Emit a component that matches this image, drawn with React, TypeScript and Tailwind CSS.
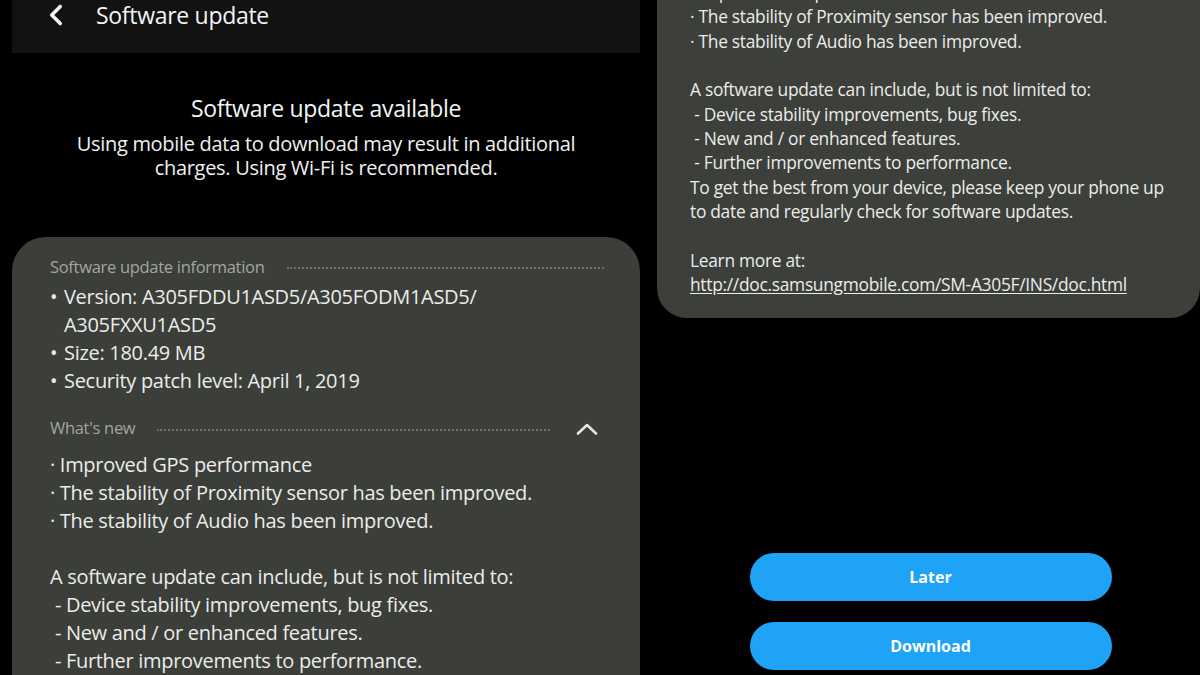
import { ChevronLeft } from "lucide-react";

const font = { fontFamily: '"Open Sans", "Noto Sans", sans-serif' };

function SectionLabel({ children, chevron }: { children: string; chevron?: boolean }) {
  return (
    <div className="flex items-center text-[16.5px] font-medium text-[#a3a69f]">
      <span>{children}</span>
      <div className="flex-1 ml-[22px] border-b-2 border-dotted border-[#6e716b] translate-y-[1px]" />
      {chevron && (
        <svg width="22" height="12" viewBox="0 0 22 12" className="ml-[26px] mr-[6px]">
          <path d="M2 10.5 L11 2 L20 10.5" fill="none" stroke="#e4e4e2" strokeWidth="2.6" strokeLinecap="round" strokeLinejoin="round" />
        </svg>
      )}
    </div>
  );
}

function LeftPanel() {
  return (
    <div className="w-[640px] shrink-0 pl-3 flex flex-col">
      {/* App bar */}
      <div className="h-[55px] bg-[#121212] flex items-start pl-[27px]">
        <ChevronLeft size={34} strokeWidth={2.5} className="text-[#f2f2f2] -mt-[2px]" />
        <span className="ml-[23px] text-[23px] leading-[30px] text-[#f4f4f4] tracking-[-0.3px]">Software update</span>
      </div>

      {/* Notice */}
      <div className="flex flex-col items-center text-center pt-[38px] pb-[57px]">
        <div className="text-[23px] text-[#f4f4f4] tracking-[-0.3px]">Software update available</div>
        <div className="mt-[6px] text-[20px] leading-[24px] text-[#f0f0f0] tracking-[-0.3px] w-[540px]">
          Using mobile data to download may result in additional charges. Using Wi-Fi is recommended.
        </div>
      </div>

      {/* Info card */}
      <div className="flex-1 bg-[#3b3e39] rounded-t-[34px] pl-[38px] pr-[36px] pt-[18px] text-[#ececea] tracking-[-0.3px]">
        <SectionLabel>Software update information</SectionLabel>
        <ul className="mt-[4px] text-[20px] leading-[28px]">
          <li className="flex">
            <span className="w-[14px]">•</span>
            <span>
              Version: A305FDDU1ASD5/A305FODM1ASD5/
              <br />
              A305FXXU1ASD5
            </span>
          </li>
          <li className="flex">
            <span className="w-[14px]">•</span>
            <span>Size: 180.49 MB</span>
          </li>
          <li className="flex">
            <span className="w-[14px]">•</span>
            <span>Security patch level: April 1, 2019</span>
          </li>
        </ul>
        <div className="mt-[21px]">
          <SectionLabel chevron>What's new</SectionLabel>
        </div>
        <div className="mt-[10px] text-[20px] leading-[28px]">
          <div>· Improved GPS performance</div>
          <div>· The stability of Proximity sensor has been improved.</div>
          <div>· The stability of Audio has been improved.</div>
          <div className="h-[28px]" />
          <div>A software update can include, but is not limited to:</div>
          <div>&nbsp;- Device stability improvements, bug fixes.</div>
          <div>&nbsp;- New and / or enhanced features.</div>
          <div>&nbsp;- Further improvements to performance.</div>
        </div>
      </div>
    </div>
  );
}

function RightPanel() {
  return (
    <div className="flex-1 pl-[17px] flex flex-col">
      <div className="-mt-[20px] bg-[#3c3f3a] rounded-b-[30px] pl-[33px] pr-6 pb-[22px] text-[17.4px] leading-[24.4px] text-[#ececea] tracking-[-0.3px]">
        <div>· Improved GPS performance</div>
        <div>· The stability of Proximity sensor has been improved.</div>
        <div>· The stability of Audio has been improved.</div>
        <div className="h-[24px]" />
        <div>A software update can include, but is not limited to:</div>
        <div>&nbsp;- Device stability improvements, bug fixes.</div>
        <div>&nbsp;- New and / or enhanced features.</div>
        <div>&nbsp;- Further improvements to performance.</div>
        <div>To get the best from your device, please keep your phone up</div>
        <div>to date and regularly check for software updates.</div>
        <div className="h-[24px]" />
        <div>Learn more at:</div>
        <div className="underline underline-offset-2">http://doc.samsungmobile.com/SM-A305F/INS/doc.html</div>
      </div>

      <div className="mt-auto mb-[5px] flex flex-col items-center gap-[21px] pl-[4px]">
        <button className="w-[362px] h-[48px] rounded-full bg-[#1fa3f6] text-white text-[16px] font-bold">
          Later
        </button>
        <button className="w-[362px] h-[48px] rounded-full bg-[#1fa3f6] text-white text-[16px] font-bold">
          Download
        </button>
      </div>
    </div>
  );
}

export default function App() {
  return (
    <div className="w-[1200px] h-[675px] bg-black flex overflow-hidden" style={font}>
      <LeftPanel />
      <RightPanel />
    </div>
  );
}
